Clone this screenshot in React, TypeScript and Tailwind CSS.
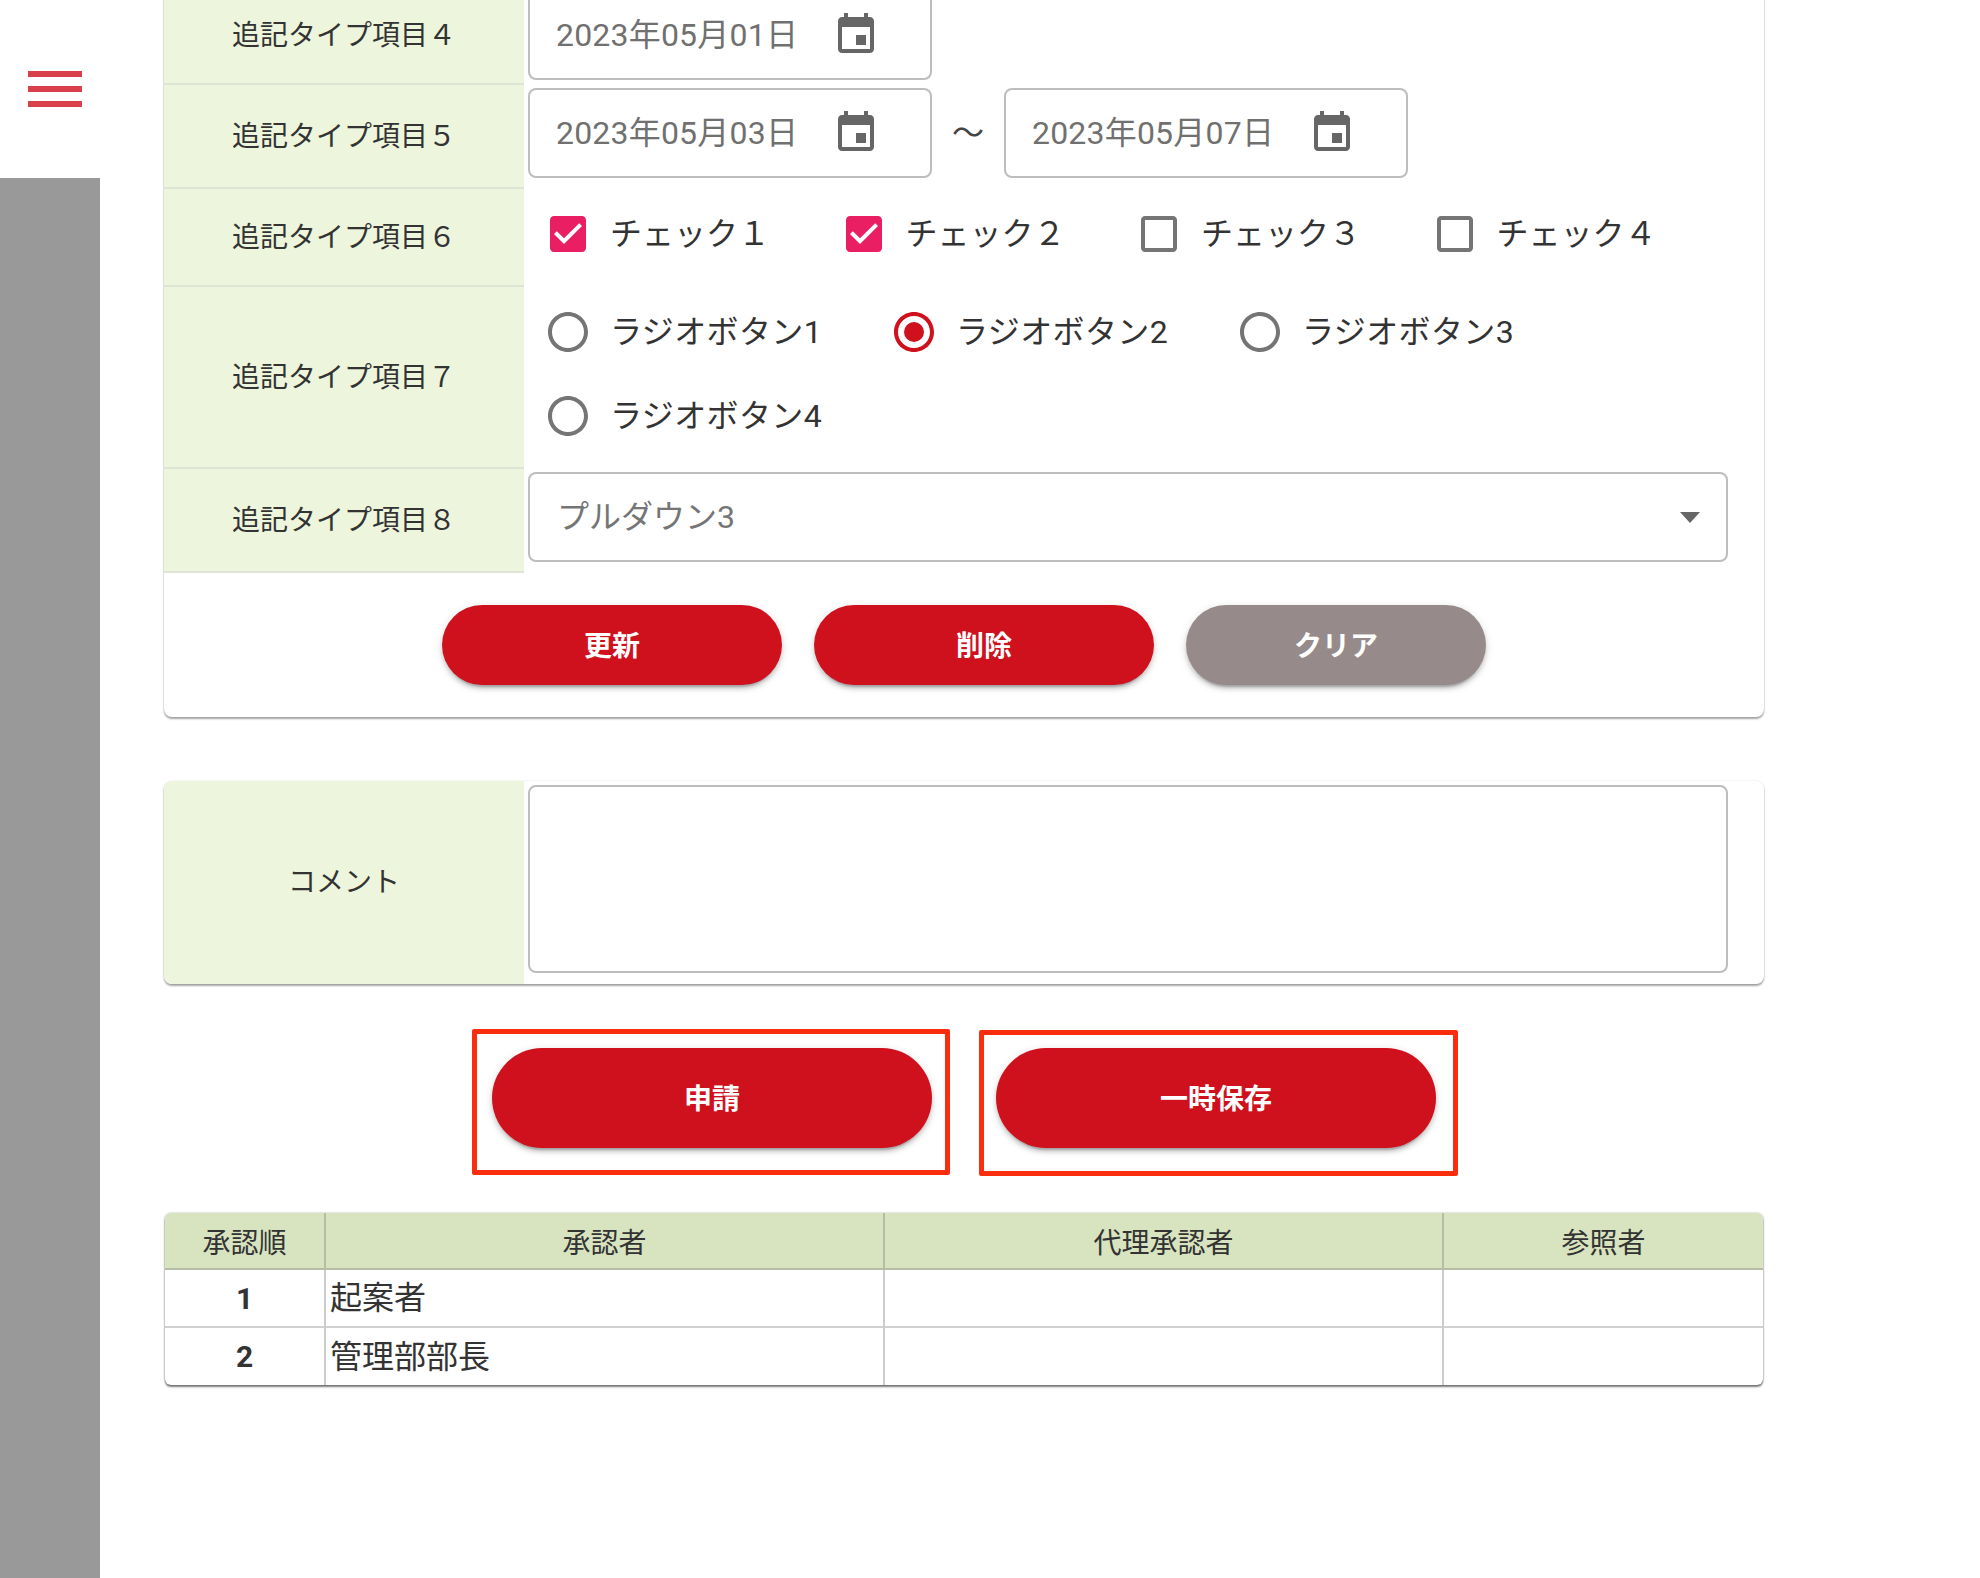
const FIELD = "flex h-[90px] items-center rounded-[8px] border-2 border-[#bdbdbd] bg-white";

function CalendarIcon() {
  return (
    <svg viewBox="0 0 24 24" className="h-12 w-12 fill-[#666666]">
      <path d="M17 12h-5v5h5v-5zM16 1v2H8V1H6v2H5c-1.11 0-1.99.9-1.99 2L3 19c0 1.1.89 2 2 2h14c1.1 0 2-.9 2-2V5c0-1.1-.9-2-2-2h-1V1h-2zm3 18H5V8h14v11z" />
    </svg>
  );
}

function DateField({ value }: { value: string }) {
  return (
    <div className={`${FIELD} w-[404px] pl-[26px]`}>
      <span className="w-[276px] text-[32px] tracking-[0.2px] text-[#707070]">{value}</span>
      <CalendarIcon />
    </div>
  );
}

function Check({ label, checked }: { label: string; checked?: boolean }) {
  return (
    <div className="flex h-[84px] w-[295.5px] items-center">
      <svg viewBox="0 0 24 24" className={`h-12 w-12 ${checked ? "fill-[#e91e63]" : "fill-[#757575]"}`}>
        {checked ? (
          <path d="M19 3H5c-1.11 0-2 .9-2 2v14c0 1.1.89 2 2 2h14c1.11 0 2-.9 2-2V5c0-1.1-.89-2-2-2zm-9 14l-5-5 1.41-1.41L10 14.17l7.59-7.59L19 8l-9 9z" />
        ) : (
          <path d="M19 5v14H5V5h14m0-2H5c-1.1 0-2 .9-2 2v14c0 1.1.9 2 2 2h14c1.1 0 2-.9 2-2V5c0-1.1-.9-2-2-2z" />
        )}
      </svg>
      <span className="ml-[18px] text-[32px] text-[#333333]">{label}</span>
    </div>
  );
}

function Radio({ label, checked }: { label: string; checked?: boolean }) {
  return (
    <div className="flex h-[84px] w-[346px] items-center">
      <svg viewBox="0 0 24 24" className={`h-12 w-12 ${checked ? "fill-[#cf111d]" : "fill-[#757575]"}`}>
        <path d="M12 2C6.48 2 2 6.48 2 12s4.48 10 10 10 10-4.48 10-10S17.52 2 12 2zm0 18c-4.42 0-8-3.58-8-8s3.58-8 8-8 8 3.58 8 8-3.58 8-8 8z" />
        {checked && <circle cx="12" cy="12" r="5" />}
      </svg>
      <span className="ml-[18px] text-[32px] tracking-[0.4px] text-[#333333]">{label}</span>
    </div>
  );
}

function Row({ label, children, className }: { label: string; children: React.ReactNode; className: string }) {
  return (
    <div className="flex">
      <div className="flex w-[360px] shrink-0 items-center justify-center border-b-2 border-[#e0e4d6] bg-[#edf5dc] pt-[2px] text-[28px] text-[#333333]">
        {label}
      </div>
      <div className={`flex-1 pl-1 ${className}`}>{children}</div>
    </div>
  );
}

function RedButton({ label, className }: { label: string; className: string }) {
  return (
    <button className={`rounded-full pt-[3px] text-[28px] font-bold text-white shadow-[0_6px_2px_-4px_rgba(0,0,0,.2),0_4px_4px_0_rgba(0,0,0,.14),0_2px_10px_0_rgba(0,0,0,.12)] ${className}`}>
      {label}
    </button>
  );
}

const APPROVERS = [
  { order: "1", name: "起案者" },
  { order: "2", name: "管理部部長" },
];

export default function App() {
  return (
    <div className="flex h-[1578px] overflow-hidden bg-white font-[Roboto,'Noto_Sans_CJK_JP',sans-serif]">
      <aside className="flex w-[100px] shrink-0 flex-col">
        <div className="flex h-[178px] flex-col gap-[9px] pl-[28px] pt-[71px]">
          <div className="h-[6px] w-[54px] bg-[#d9404c]" />
          <div className="h-[6px] w-[54px] bg-[#d9404c]" />
          <div className="h-[6px] w-[54px] bg-[#d9404c]" />
        </div>
        <div className="flex-1 bg-[#999999]" />
      </aside>

      <main className="-mt-[13px] ml-[64px] w-[1600px]">
        <section className="rounded-b-[8px] bg-white shadow-[0_2px_2px_rgba(0,0,0,.35),0_0_2px_rgba(0,0,0,.12)]">
          <Row label="追記タイプ項目４" className="pb-[5px] pt-[3px]">
            <DateField value="2023年05月01日" />
          </Row>
          <Row label="追記タイプ項目５" className="flex items-center pb-[11px] pt-[3px]">
            <DateField value="2023年05月03日" />
            <span className="w-[72px] text-center text-[32px] text-[#444444]">〜</span>
            <DateField value="2023年05月07日" />
          </Row>
          <Row label="追記タイプ項目６" className="flex pb-[11px] pl-[20px] pt-[3px]">
            <Check label="チェック１" checked />
            <Check label="チェック２" checked />
            <Check label="チェック３" />
            <Check label="チェック４" />
          </Row>
          <Row label="追記タイプ項目７" className="flex flex-wrap pb-[11px] pl-[20px] pt-[3px]">
            <Radio label="ラジオボタン1" />
            <Radio label="ラジオボタン2" checked />
            <Radio label="ラジオボタン3" />
            <Radio label="ラジオボタン4" />
          </Row>
          <Row label="追記タイプ項目８" className="pb-[11px] pr-[36px] pt-[3px]">
            <div className={`${FIELD} justify-between pl-[27px] pr-[26px]`}>
              <span className="text-[32px] text-[#757575]">プルダウン3</span>
              <svg viewBox="0 0 20 11" className="h-[11px] w-5 fill-[#666666]">
                <path d="M0 0h20L10 11z" />
              </svg>
            </div>
          </Row>
          <div className="flex justify-center gap-[32px] pb-[32px] pt-[32px]">
            <RedButton label="更新" className="h-20 w-[340px] bg-[#cf111d]" />
            <RedButton label="削除" className="h-20 w-[340px] bg-[#cf111d]" />
            <RedButton label="クリア" className="h-20 w-[300px] bg-[#968b8a]" />
          </div>
        </section>

        <section className="mt-[64px] flex h-[203px] rounded-[8px] bg-white shadow-[0_2px_2px_rgba(0,0,0,.35),0_0_2px_rgba(0,0,0,.12)]">
          <div className="flex w-[360px] shrink-0 items-center justify-center rounded-bl-[8px] rounded-tl-[8px] bg-[#edf5dc] text-[28px] text-[#333333]">
            コメント
          </div>
          <div className="flex-1 pb-[11px] pl-1 pr-[36px] pt-1">
            <div className="h-full rounded-[8px] border-2 border-[#bdbdbd]" />
          </div>
        </section>

        <div className="mt-[45px] flex items-start gap-[29px] pl-[308px]">
          <div className="h-[146px] w-[478px] rounded-[2px] border-[5px] border-[#fa2e0c] pl-[15px] pt-[14px]">
            <RedButton label="申請" className="h-[100px] w-[440px] bg-[#cf111d]" />
          </div>
          <div className="mt-[1px] h-[146px] w-[479px] rounded-[2px] border-[5px] border-[#fa2e0c] pl-[12px] pt-[13px]">
            <RedButton label="一時保存" className="h-[100px] w-[440px] bg-[#cf111d]" />
          </div>
        </div>

        <div className="ml-[1px] mt-[37px] w-[1598px] overflow-hidden rounded-[6px] shadow-[0_2px_2px_rgba(0,0,0,.5),0_0_2px_rgba(0,0,0,.35)]">
          <table className="w-full table-fixed border-collapse">
            <colgroup>
              <col className="w-[160px]" />
              <col className="w-[559px]" />
              <col className="w-[559px]" />
              <col />
            </colgroup>
            <thead>
              <tr className="h-[56px] bg-[#d8e4bf] text-[28px] font-normal text-[#333333]">
                {["承認順", "承認者", "代理承認者", "参照者"].map((h, i) => (
                  <th key={h} className={`border-b-2 border-[#b6bda6] pt-[6px] font-normal ${i < 3 ? "border-r-2" : ""}`}>
                    {h}
                  </th>
                ))}
              </tr>
            </thead>
            <tbody>
              {APPROVERS.map((a) => (
                <tr key={a.order} className="h-[58px] border-b-2 border-[#d0d0d0] text-[#333333] last:border-b-0">
                  <td className="border-r-2 border-[#cccccc] text-center text-[30px] font-bold">{a.order}</td>
                  <td className="border-r-2 border-[#cccccc] pl-1 text-[32px]">{a.name}</td>
                  <td className="border-r-2 border-[#cccccc]" />
                  <td />
                </tr>
              ))}
            </tbody>
          </table>
        </div>
      </main>
    </div>
  );
}
